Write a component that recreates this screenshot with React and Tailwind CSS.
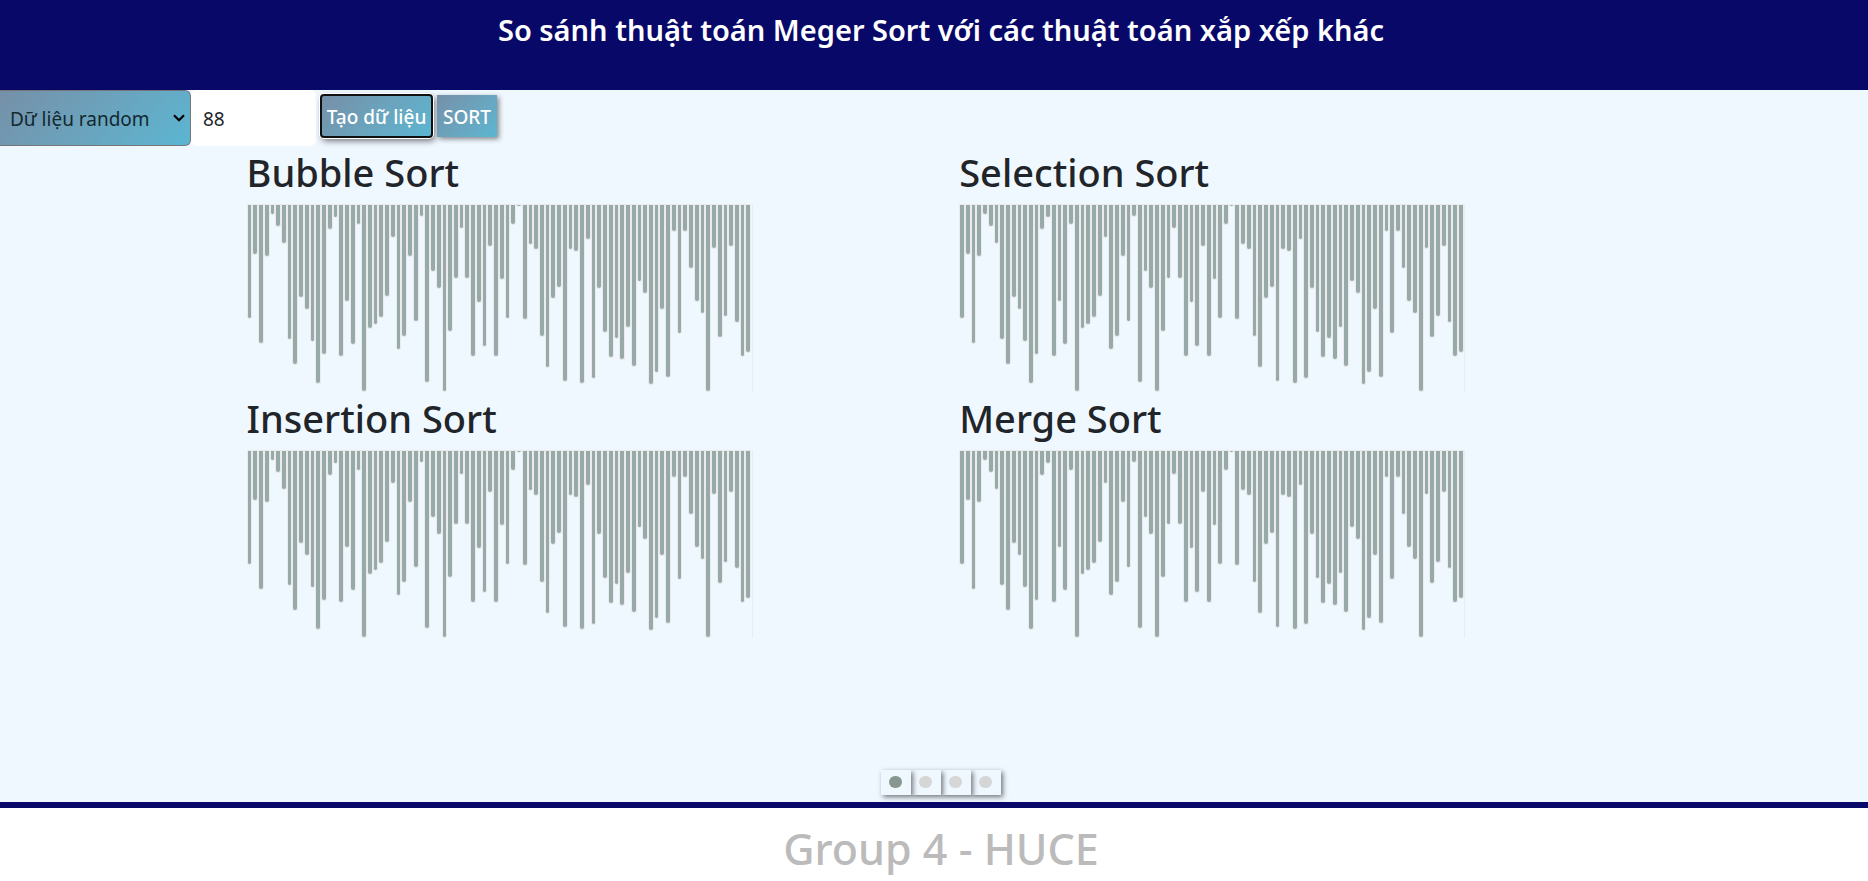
import { useState } from "react";

const VALUES = [
  115, 51, 140, 53, 11, 23, 40, 136, 161, 94, 106, 138, 180, 151, 26, 14, 153, 98, 141, 21, 188, 125,
  121, 114, 93, 34, 146, 133, 53, 118, 13, 179, 68, 85, 188, 128, 75, 25, 75, 153, 99, 143, 43, 153,
  76, 115, 21, 3, 116, 41, 46, 133, 164, 95, 84, 178, 46, 48, 180, 36, 175, 85, 129, 154, 135, 156, 124,
  163, 78, 90, 181, 169, 106, 174, 28, 130, 28, 65, 98, 110, 188, 45, 134, 113, 43, 119, 153, 149,
];

const CHARTS = ["Bubble Sort", "Selection Sort", "Insertion Sort", "Merge Sort"];

const SLIDE_LAYERS = ["z-40", "z-30", "z-20", "z-10"];

function Chart({ title }) {
  return (
    <section>
      <h2 className="mb-2 text-[38px] leading-[48px] font-medium text-[#212529]">{title}</h2>
      <div className="flex h-[190px] items-start" role="img" aria-label={`${title} data`}>
        <div className="flex w-[504px] items-start">
          {VALUES.map((value, i) => (
            <div
              key={i}
              className="min-w-0 flex-1 rounded-b-[3px] border border-[#ebebeb] bg-[#97a9a8]"
              style={{ height: value }}
            />
          ))}
        </div>
        <div className="ml-px h-[188px] w-px bg-[#ececec]" />
      </div>
    </section>
  );
}

export default function App() {
  const [slide, setSlide] = useState(0);
  const gradient = "bg-linear-135 from-[#7590a8] to-[#5ab6d2]";
  return (
    <div className="flex min-h-screen flex-col bg-[#f0f8ff] font-['Noto_Sans',sans-serif] text-[#212529]">
      <header className="h-[90px] bg-[#080869] pt-[10px] pl-3.5 text-center">
        <h1 className="text-[29px] leading-10 font-semibold text-white">
          So sánh thuật toán Meger Sort với các thuật toán xắp xếp khác
        </h1>
      </header>

      <main className="flex flex-1 flex-col">
        <div className="flex items-start">
          <div className="relative">
            <select
              aria-label="Kiểu dữ liệu"
              className={`h-14 w-[191px] appearance-none rounded-r-md border border-l-0 border-[#767676] pt-0.5 pl-[10px] text-[19px] text-[#142830] ${gradient}`}
            >
              <option>Dữ liệu random</option>
            </select>
            <svg className="pointer-events-none absolute top-6 right-1.5 h-2 w-3" viewBox="0 0 12 8" fill="none" stroke="black" strokeWidth="2.2">
              <path d="M1 1.2 6 6.2 11 1.2" />
            </svg>
          </div>
          <input
            aria-label="Số phần tử"
            defaultValue="88"
            className="h-14 w-[125px] rounded-md bg-white px-3 pt-0.5 text-[19px]"
          />
          <button className={`mt-1 ml-1 h-11 w-[113px] rounded-[4px] border-2 border-[#101010] pt-0.5 text-[19px] font-medium whitespace-nowrap text-white shadow-[0_0_0_1px_white,2px_3px_6px_#0008] ${gradient}`}>
            Tạo dữ liệu
          </button>
          <button className={`mt-[5px] ml-1 h-[42px] w-[60px] pt-0.5 text-[19px] font-medium text-white shadow-[2px_2px_5px_#0007] ${gradient}`}>
            SORT
          </button>
        </div>

        <div className="ml-[13.2%] grid w-[76.3%] grid-cols-2 pt-[2px]">
          {CHARTS.map((title) => (
            <Chart key={title} title={title} />
          ))}
        </div>

        <nav className="isolate mt-auto mb-[7px] flex justify-center pl-[14px]" aria-label="Slides">
          {SLIDE_LAYERS.map((layer, i) => (
            <button
              key={i}
              aria-label={`Slide ${i + 1}`}
              onClick={() => setSlide(i)}
              className={`flex h-[25px] w-[30px] items-center justify-center bg-[#f0f8ff] pr-0.5 pb-0.5 shadow-[2px_2px_5px_#0008] ${layer}`}
            >
              <span className={`h-3 w-[13px] rounded-full ${slide === i ? "bg-[#869791]" : "bg-[#d6d6d6]"}`} />
            </button>
          ))}
        </nav>
      </main>

      <footer className="h-[79px] border-t-[6px] border-[#080869] bg-white pt-[14px] pl-3.5 text-center">
        <p className="text-[43px] leading-[54px] font-medium text-[#bbbbbb]">Group 4 - HUCE</p>
      </footer>
    </div>
  );
}
